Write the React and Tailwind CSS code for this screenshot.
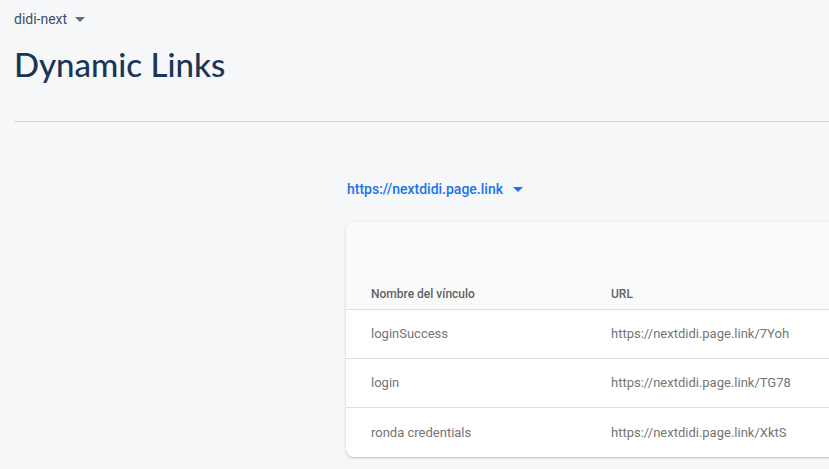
import React from 'react';

const links = [
  { name: 'loginSuccess', url: 'https://nextdidi.page.link/7Yoh' },
  { name: 'login', url: 'https://nextdidi.page.link/TG78' },
  { name: 'ronda credentials', url: 'https://nextdidi.page.link/XktS' },
];

function Caret({ className }) {
  return (
    <svg viewBox="0 0 10 5" className={className} fill="currentColor">
      <path d="M0 0 L5 5 L10 0 Z" />
    </svg>
  );
}

function App() {
  return (
    <div
      className="min-h-[469px] w-full overflow-hidden bg-[#f6f7f9]"
      style={{ fontFamily: 'Roboto, "Liberation Sans", sans-serif' }}
    >
      <header className="pl-[14px] pt-[9px]">
        <button className="flex items-center gap-[8px] text-[14px] text-[#3d4f69]">
          didi-next
          <Caret className="w-[10px] h-[5px] text-[#5a6a80]" />
        </button>
        <h1
          className="mt-[16px] text-[33px] font-medium leading-[36px] text-[#1b3556]"
          style={{ fontFamily: 'Lato, "Open Sans", sans-serif' }}
        >
          Dynamic Links
        </h1>
        <div className="mt-[39px] h-px bg-[#cdd5de]" />
      </header>

      <main className="pl-[346px] pt-[57px]">
        <button className="ml-px flex items-center gap-[10px] text-[14px] font-medium text-[#1a73e8]">
          https://nextdidi.page.link
          <Caret className="w-[10px] h-[5px]" />
        </button>

        <div className="mt-[22px] w-[620px] rounded-[8px] bg-white shadow-[0_1px_3px_rgba(0,0,0,0.18),0_1px_1px_rgba(0,0,0,0.08)] overflow-hidden">
          <div className="h-[88px] bg-[#fafafa] border-b border-[#e0e0e0] flex items-end pb-[6px]">
            <div className="w-[265px] pl-[25px] text-[12px] font-medium text-[#5f6368]">Nombre del vínculo</div>
            <div className="text-[12px] font-medium text-[#5f6368]">URL</div>
          </div>
          {links.map((l, i) => (
            <div
              key={l.name}
              className={`h-[49px] flex items-center text-[13px] text-[#757575] ${i < links.length - 1 ? 'border-b border-[#e0e0e0]' : ''}`}
            >
              <div className="w-[265px] pl-[25px]">{l.name}</div>
              <div>{l.url}</div>
            </div>
          ))}
        </div>
      </main>
    </div>
  );
}

export default App;
